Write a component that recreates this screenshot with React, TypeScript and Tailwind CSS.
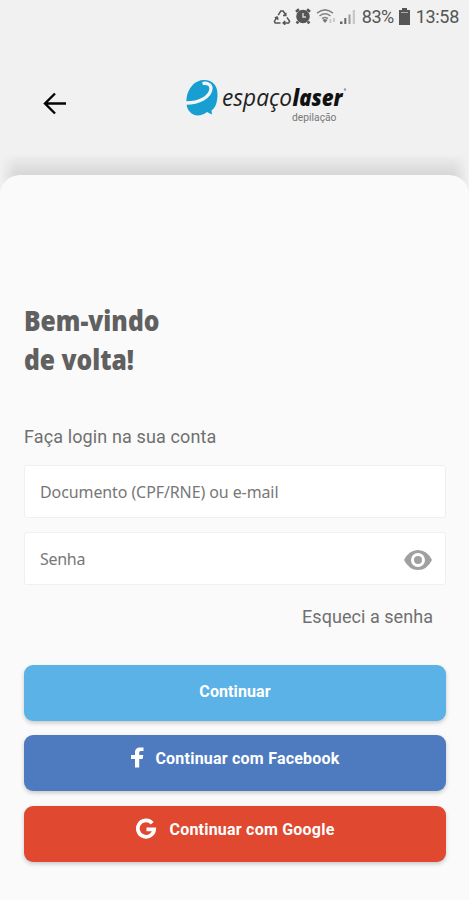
import type { ReactNode } from 'react';

function StatusBar() {
  return (
    <div className="flex h-[34px] items-center justify-end pr-[10px] pb-[1px] text-[#555]">
      <svg className="mr-[4px]" width="18" height="16" viewBox="0 0 18 16" fill="none" stroke="currentColor" strokeWidth="1.5">
        <path d="M5.2 6.2 7.8 2h2.4l2.5 4.2M12.8 3.8v2.7H10M14 8.3l2.6 4-1 1.8H10.5M12.2 12l-2 2 2 1.800M7.500 14H2.200l-.8-1.800L4.200 8M1.800 8.800l2.500-.7.7 2.600" />
      </svg>
      <svg className="mr-[5px]" width="16" height="17" viewBox="0 0 16 17">
        <path d="M1 3.800 4 1.200M15 3.800 12 1.200M3 13.500 1.800 15.500M13 13.500l1.200 2" stroke="currentColor" strokeWidth="2.6" />
        <circle cx="8" cy="8.500" r="6.800" fill="currentColor" />
        <path d="M8 5v4h3" stroke="#d8d8d8" strokeWidth="1.4" fill="none" />
      </svg>
      <svg className="mr-[3px]" width="21" height="17" viewBox="0 0 21 17" fill="none" stroke="#858585" strokeWidth="1.6">
        <path d="M1 5.200Q9 -1.500 17 5.200M3.500 8Q9 3.500 14.500 8M6 10.600Q9 8.300 12 10.600" />
        <path d="m9 15-2.500-3q2.500-2 5 0z" fill="#777" stroke="none" />
        <path d="M14.500 11v4M18 10v4" stroke="#c4c4c4" />
      </svg>
      <svg className="mr-[6px]" width="16" height="16" viewBox="0 0 16 16">
        <path fill="#666" d="M0 12.500h2.500V15H0zM4.300 9h2v6h-2z" />
        <path fill="#999" d="M8.500 5.500h2V15h-2z" />
        <path fill="#c8c8c8" d="M12.700 1H15v14h-2.300z" />
      </svg>
      <span className="w-[32px] whitespace-nowrap text-[18px] tracking-[-0.4px]">83%</span>
      <svg className="mr-[6px] ml-[5px]" width="11" height="17" viewBox="0 0 11 17">
        <path d="M3 0h5v2h3v15H0V2h3z" fill="currentColor" />
        <path d="M2 4h7v1H2z" fill="#aaa" />
      </svg>
      <span className="whitespace-nowrap text-[18px] tracking-[-0.3px]">13:58</span>
    </div>
  );
}

function BrandLogo() {
  return (
    <svg className="ml-[118px]" width="165" height="50" viewBox="185 77 165 50">
      <path
        d="M186.500 99C187.500 88 195 80 204 80C214 80 218 87 217.500 96C217 104 215 108 211.500 110.500L212 114.500L207 112C202 116 194 117 190 112C187 109 186 104 186.500 99Z"
        fill="#169fd0"
      />
      <path d="M186 103C199 103 210.500 97 211 88.500C211.200 84.500 207 82.500 202.500 83.500" fill="none" stroke="#f4f4f4" strokeWidth="3.300" />
      <text x="222" y="106" textLength="70" lengthAdjust="spacingAndGlyphs" fontFamily="'Open Sans','Noto Sans',sans-serif" fontStyle="italic" fontSize="23" fill="#222">espaço</text>
      <text x="292.500" y="106" textLength="50" lengthAdjust="spacingAndGlyphs" fontFamily="'Open Sans','Noto Sans',sans-serif" fontStyle="italic" fontWeight="800" fontSize="23" fill="#111">laser</text>
      <circle cx="345" cy="89.500" r="1.200" fill="#999" />
      <text x="292" y="121" textLength="44.500" lengthAdjust="spacingAndGlyphs" fontFamily="Roboto,sans-serif" fontSize="10.500" fill="#777">depilação</text>
    </svg>
  );
}

function ActionButton({ className, children }: { className: string; children: ReactNode }) {
  return (
    <button className={`flex h-[56px] w-full justify-center rounded-[9px] text-[16px] font-bold text-white shadow-[0_2px_4px_rgba(0,0,0,0.2)] ${className}`}>
      {children}
    </button>
  );
}

export default function App() {
  return (
    <div className="flex h-[900px] w-[469px] flex-col overflow-hidden bg-[#f1f1f1] font-[Roboto,sans-serif]">
      <StatusBar />
      <header className="flex h-[120px] pt-[43px] pl-[43px]">
        <svg className="mt-[15px]" width="24" height="24" viewBox="0 0 24 24" fill="none" stroke="#050505" strokeWidth="2.4">
          <path d="M23 11.500H3M12 1.500 2 11.500l10 10" />
        </svg>
        <BrandLogo />
      </header>
      <div className="flex flex-1 flex-col bg-[linear-gradient(to_right,#f1f1f1_0,#f1f1f100_16px,#f1f1f100_453px,#f1f1f1_469px),linear-gradient(to_bottom,#f1f1f1_0,#e3e3e3_10px,#d8d8d8_20px,#d8d8d8_24px,#f1f1f1_42px)] pt-[21px]">
        <main className="flex-1 rounded-t-[20px] bg-[#fafafa] pr-[23px] pl-6">
          <h1 className="w-[200px] origin-left scale-x-[0.88] pt-[126px] font-['Noto_Sans',sans-serif] text-[28px] leading-[39px] font-black whitespace-nowrap text-[#606060]">
            Bem-vindo
            <br />
            de volta!
          </h1>
          <p className="mt-[46px] text-[18px] leading-[24px] tracking-[0.12px] text-[#707070]">Faça login na sua conta</p>
          <form className="mt-[16px]">
            <div className="flex h-[53px] items-center rounded-[3px] border border-[#f0f0f0] bg-white px-[15px] font-['Noto_Sans',sans-serif] text-[16px] tracking-[-0.1px] text-[#777]">
              <span>Documento (CPF/RNE) ou e-mail</span>
            </div>
            <div className="mt-[14px] flex h-[53px] items-center justify-between rounded-[3px] border border-[#f0f0f0] bg-white pr-[12px] pl-[15px] font-['Noto_Sans',sans-serif] text-[16px] tracking-[-0.3px] text-[#777]">
              <span>Senha</span>
              <svg width="30" height="22" viewBox="0 0 30 22">
                <path fillRule="evenodd" d="M1 12Q6 2 15 2t14 10q-5 10-14 10T1 12ZM15 5a7 7 0 1 0 0 14 7 7 0 0 0 0-14Zm0 3a4 4 0 1 1 0 8 4 4 0 0 1 0-8Z" fill="#a0a0a0" />
              </svg>
            </div>
          </form>
          <p className="mt-[20px] mr-[13px] text-right text-[18px] leading-[24px] tracking-[0.05px] text-[#707070]">Esqueci a senha</p>
          <div className="mt-[36px] flex flex-col gap-[14.4px]">
            <ActionButton className="bg-[#5bb2e6] pt-[15px]">
              <span className="tracking-[0.1px]">Continuar</span>
            </ActionButton>
            <ActionButton className="bg-[#4e7bc0] pt-[12px]">
              <svg className="mr-[10px]" width="15" height="21" viewBox="0 0 15 21" fill="#fff">
                <path d="M5 20.500V12H1V8h4V5.500C5 2 7 .5 10 .5h3.500V4H11C9.500 4 9.200 4.700 9.200 6v2h4.100l-.7 4H9.200v8.500z" />
              </svg>
              <span className="tracking-[0.22px]">Continuar com Facebook</span>
            </ActionButton>
            <ActionButton className="bg-[#e04830] pt-[12px]">
              <svg className="mr-[12px]" width="22" height="22" viewBox="0 0 22 22" fill="none" stroke="#fff" strokeWidth="3.700">
                <path d="M17.200 5.200A8.200 8.200 0 1 0 19.200 11.300H11.500" />
              </svg>
              <span className="tracking-[0.22px]">Continuar com Google</span>
            </ActionButton>
          </div>
        </main>
      </div>
    </div>
  );
}
